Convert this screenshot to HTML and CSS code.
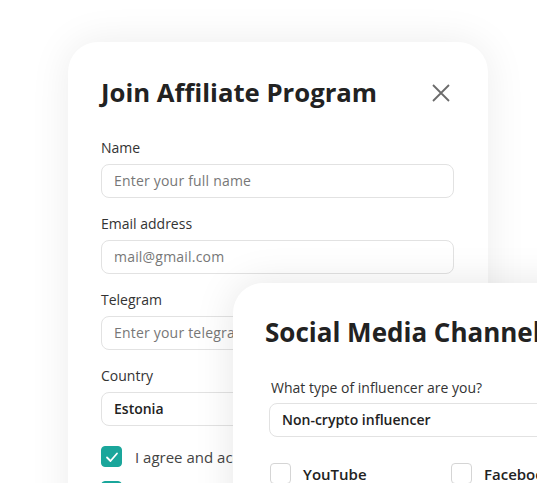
FILE: index.html
```html
<!DOCTYPE html>
<html lang="en">
<head>
  <meta charset="UTF-8" />
  <meta name="viewport" content="width=device-width, initial-scale=1.0" />
  <title>Join Affiliate Program</title>
  <link rel="stylesheet" href="styles.css">
</head>
<body>
  <div class="stage">
    <!-- Main form card -->
    <div class="card card-main">
      <div class="card-head">
        <h2>Join Affiliate Program</h2>
        <button class="close" aria-label="Close">
          <svg width="20" height="20" viewBox="0 0 20 20"><path d="M2 2 L18 18 M18 2 L2 18" stroke="#6b6b6b" stroke-width="1.8" fill="none"/></svg>
        </button>
      </div>

      <label class="field-label">Name</label>
      <div class="field placeholder">Enter your full name</div>

      <label class="field-label">Email address</label>
      <div class="field placeholder">mail@gmail.com</div>

      <label class="field-label">Telegram</label>
      <div class="field placeholder">Enter your telegram username</div>

      <label class="field-label">Country</label>
      <div class="field value">Estonia</div>

      <div class="terms">
        <div class="check-row">
          <span class="box checked">
            <svg width="14" height="14" viewBox="0 0 14 14"><path d="M2 7.5 L5.5 11 L12 3.5" stroke="#fff" stroke-width="1.8" fill="none" stroke-linecap="round" stroke-linejoin="round"/></svg>
          </span>
          <span>I agree and accept the terms</span>
        </div>
        <div class="check-row">
          <span class="box checked"></span>
          <span>I want to receive news</span>
        </div>
      </div>
    </div>

    <!-- Second card, lies over the first -->
    <div class="card card-social">
      <h2>Social Media Channels</h2>
      <label class="field-label">What type of influencer are you?</label>
      <div class="field value">Non-crypto influencer</div>
      <div class="channels">
        <div class="check-row"><span class="box"></span><span class="strong">YouTube</span></div>
        <div class="check-row"><span class="box"></span><span class="strong">Facebook</span></div>
      </div>
    </div>
  </div>
</body>
</html>
```

FILE: styles.css
```css
/* Global styles */
body {
  margin: 0;
  background: #fff;
  color: #222;
  font-family: "Open Sans", Arial, sans-serif;
  overflow: hidden;
}
.stage {
  position: relative;
  width: 537px;
  height: 483px;
  overflow: hidden;
  padding: 42px 0 0 68px;
  box-sizing: border-box;
}
/* Cards: white with big rounded corners and soft shadow */
.card {
  background: #fff;
  border-radius: 30px;
  box-shadow: 0 0 40px rgba(0, 0, 0, 0.08);
  box-sizing: border-box;
}
.card-main {
  width: 420px;
  height: 520px;
  padding: 30px 34px 0 33px;
}
.card-head {
  display: flex;
  justify-content: space-between;
  align-items: center;
  margin-bottom: 24px;
}
h2 {
  margin: 0;
  font-size: 25.7px;
  font-weight: 700;
  color: #222;
  line-height: 42px;
  white-space: nowrap;
}
.close {
  background: none;
  border: 0;
  padding: 0;
  margin-right: 3px;
  display: flex;
}
.field-label {
  display: block;
  font-size: 14px;
  line-height: 20px;
  color: #333;
  margin-bottom: 6px;
}
.field {
  height: 34px;
  border: 1px solid #e2e2e2;
  border-radius: 8px;
  box-sizing: border-box;
  padding: 0 12px;
  font-size: 14px;
  line-height: 32px;
  white-space: nowrap;
  overflow: hidden;
  margin-bottom: 16px;
}
.placeholder {
  color: #777;
  letter-spacing: 0.2px;
}
.value {
  color: #222;
  font-weight: 600;
}
.terms {
  padding-top: 4px;
}
.check-row {
  display: flex;
  align-items: center;
  gap: 13px;
  font-size: 15px;
  color: #444;
  margin-bottom: 14px;
  white-space: nowrap;
}
.box {
  width: 21px;
  height: 21px;
  border: 1px solid #d5d5d5;
  border-radius: 4px;
  box-sizing: border-box;
  display: flex;
  align-items: center;
  justify-content: center;
  flex-shrink: 0;
}
.box.checked {
  background: #1aa69b;
  border-color: #1aa69b;
}
.strong {
  font-weight: 600;
  color: #222;
}
.card-social {
  position: absolute;
  left: 233px;
  top: 283px;
  width: 360px;
  height: 260px;
  padding: 28px 0 0 32px;
  box-shadow: 0 0 40px rgba(0, 0, 0, 0.1);
}
.card-social h2 {
  font-size: 26px;
  margin-bottom: 25px;
}
.card-social .field-label {
  padding-left: 6px;
  margin-bottom: 5px;
}
.card-social .field {
  margin-left: 4px;
  margin-bottom: 26px;
}
.channels {
  display: grid;
  grid-template-columns: 181px 1fr;
  padding-left: 5px;
}
.channels .check-row {
  gap: 12px;
}
```
